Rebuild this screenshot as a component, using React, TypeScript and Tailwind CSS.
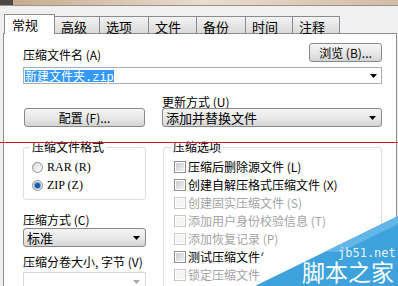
import { ReactNode } from 'react';

const tabs = [
	{ label: '高级', width: 'w-[45px]' },
	{ label: '选项', width: 'w-[49px]' },
	{ label: '文件', width: 'w-[48px]' },
	{ label: '备份', width: 'w-[49px]' },
	{ label: '时间', width: 'w-[47px]' },
	{ label: '注释', width: 'w-[47px]' },
];

const options = [
	{ label: '压缩后删除源文件 (L)', disabled: false },
	{ label: '创建自解压格式压缩文件 (X)', disabled: false },
	{ label: '创建固实压缩文件 (S)', disabled: true },
	{ label: '添加用户身份校验信息 (T)', disabled: true },
	{ label: '添加恢复记录 (P)', disabled: true },
	{ label: '测试压缩文件', disabled: false, tick: true },
	{ label: '锁定压缩文件', disabled: true },
];

/**
 * Small black triangle used by every combo box
 */
const Arrow = ({ gray }: { gray?: boolean }) => (
	<svg width="7" height="4" viewBox="0 0 7 4" className="shrink-0">
		<polygon points="0,0 7,0 3.5,4" fill={gray ? '#a8a8a8' : '#000'} />
	</svg>
);

const Button = ({ children, className }: { children: ReactNode; className: string }) => (
	<div
		className={`flex items-center justify-center h-[19px] rounded-[3px] border border-[#8a8a8a] bg-linear-to-b from-[#f5f5f5] via-[#e9e9e9] to-[#d4d4d4] text-[12px] leading-[12px] whitespace-nowrap ${className}`}>
		{children}
	</div>
);

const DropButton = ({ text }: { text: string }) => (
	<div className="flex items-center justify-between h-[19px] rounded-[3px] border border-[#8a8a8a] bg-linear-to-b from-[#f5f5f5] via-[#e9e9e9] to-[#d4d4d4] pl-[3px] pr-[5px]">
		<span className="text-[13px] leading-[13px]">{text}</span>
		<Arrow />
	</div>
);

const Radio = ({ label, checked }: { label: string; checked?: boolean }) => (
	<div className="flex items-center gap-[4px] h-[18px]">
		<div className="w-[11px] h-[11px] rounded-full border border-[#8e8f8f] bg-linear-to-br from-[#dcdcdc] to-[#fbfbfb] flex items-center justify-center">
			{checked ? <div className="w-[5px] h-[5px] rounded-full bg-[#1c5aa0] ring-1 ring-[#6aa0d8]" /> : null}
		</div>
		<span className="text-[12px] leading-[12px] font-['Liberation_Serif',serif]">{label}</span>
	</div>
);

const Checkbox = ({ label, disabled, tick }: { label: string; disabled?: boolean; tick?: boolean }) => (
	<div className="flex items-center gap-[2px] h-[18px]">
		<div
			className={`w-[12px] h-[12px] border flex items-center justify-center bg-white ${
				disabled ? 'border-[#c9c9c9]' : 'border-[#8e8f8f]'
			}`}>
			<div
				className={`w-[8px] h-[8px] ${
					disabled ? 'bg-[#f4f4f4]' : 'bg-linear-to-br from-[#c9ccd1] to-[#f2f2f2]'
				}`}
			/>
		</div>
		<span className={`text-[12px] leading-[12px] whitespace-nowrap ${disabled ? 'text-[#a3a3a3]' : 'text-black'}`}>
			{label}
			{tick ? <span className="inline-block h-[5px] overflow-hidden align-top">(</span> : null}
		</span>
	</div>
);

const App = () => {
	return (
		<div className="relative w-[398px] h-[286px] overflow-hidden bg-[#f0f0f0] text-black font-['Noto_Sans_CJK_SC',sans-serif]">
			{/* window title strip */}
			<div className="flex h-[6px] border-b border-[#9a928a]">
				<div className="w-[13px] bg-[#4d4843]" />
				<div className="flex-1 bg-linear-to-r from-[#c7ab8f] via-[#e9ddd0] to-[#d2bba3]" />
			</div>

			{/* tabs */}
			<div className="flex items-end h-[19px] mt-[8px] pl-[4px]">
				<div className="relative z-10 h-[20px] w-[51px] -mb-px border border-b-0 border-[#898c95] bg-white pl-[7px] pt-[3px] text-[13px] leading-[13px]">
					常规
				</div>
				{tabs.map((tab) => (
					<div
						key={tab.label}
						className={`h-[17px] ${tab.width} border-t border-r border-[#898c95] bg-linear-to-b from-[#f4f4f4] to-[#d9d9d9] pl-[6px] pt-[3px] text-[13px] leading-[13px]`}>
						{tab.label}
					</div>
				))}
			</div>

			{/* tab page */}
			<div className="ml-[3px] w-[394px] h-[260px] border border-[#898c95] bg-white pl-[19px] pr-[14px] pt-[9px]">
				<div className="flex items-end justify-between h-[19px]">
					<span className="text-[12px] leading-[12px] mb-[1px]">压缩文件名 (A)</span>
					<Button className="w-[73px]">浏览 (B)...</Button>
				</div>

				<div className="mt-[5px] h-[17px] border border-[#abadb3] bg-white flex items-center justify-between pl-[1px] pr-[4px]">
					<span className="h-[12px] bg-[#3399ff] text-white text-[12px] leading-[12px]">
						新建文件夹<span className="font-['Liberation_Mono',monospace]">.zip</span>
					</span>
					<Arrow />
				</div>

				<div className="mt-[12px] flex items-end">
					<Button className="ml-[1px] w-[121px]">配置 (F)...</Button>
					<div className="ml-[17px] flex-1 flex flex-col">
						<span className="text-[12px] leading-[12px]">更新方式 (U)</span>
						<DropButton text="添加并替换文件" />
					</div>
				</div>

				<div className="mt-[14px] flex items-start">
					<div className="w-[123px] flex flex-col">
						<fieldset className="border border-[#d5dfe5] rounded-[3px] pl-[8px] pb-[5px]">
							<legend className="-ml-[2px] px-[2px] text-[12px] leading-[12px]">压缩文件格式</legend>
							<div className="mt-[5px]">
								<Radio label="RAR (R)" />
								<Radio label="ZIP (Z)" checked />
							</div>
						</fieldset>

						<span className="mt-[14px] text-[12px] leading-[12px]">压缩方式 (C)</span>
						<div className="mt-[2px]">
							<DropButton text="标准" />
						</div>
						<span className="mt-[9px] text-[12px] leading-[12px] whitespace-nowrap">压缩分卷大小, 字节 (V)</span>
						<div className="mt-[4px] h-[19px] border border-[#d9d9d9] bg-white flex items-center justify-end pr-[5px]">
							<Arrow gray />
						</div>
					</div>

					<fieldset className="ml-[17px] w-[219px] h-[160px] border border-[#d5dfe5] rounded-[3px] pl-[10px]">
						<legend className="-ml-[3px] px-[2px] text-[12px] leading-[12px]">压缩选项</legend>
						<div className="mt-[5px]">
							{options.map((option) => (
								<Checkbox
									key={option.label}
									label={option.label}
									disabled={option.disabled}
									tick={option.tick}
								/>
							))}
						</div>
					</fieldset>
				</div>
			</div>

			{/* red annotation line */}
			<div className="absolute left-0 right-0 top-[142px] h-px bg-[#c8191e]" />

			{/* watermark */}
			<div className="absolute right-0 bottom-0 w-[143px] h-[70px]">
				<svg width="143" height="70" viewBox="0 0 143 70" className="absolute inset-0">
					<polygon points="0,70 143,0 143,70" fill="#3ea2dd" />
					<polygon points="70,35.7 143,0 143,8 86,36" fill="#63b7e8" />
				</svg>
				<span className="absolute left-[83px] top-[30px] text-[12px] leading-[14px] text-[#e4f3fc] font-['DejaVu_Sans_Mono',monospace]">
					jb51.net
				</span>
				<span className="absolute left-[47px] top-[43px] text-[23px] leading-[25px] text-white">
					脚本之家
				</span>
			</div>
		</div>
	);
};

export default App;
